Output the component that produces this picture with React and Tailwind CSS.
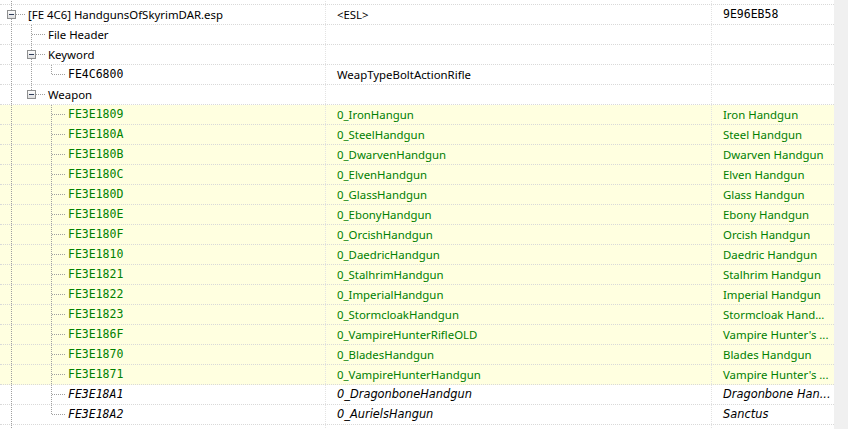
import React from "react";

const UI = "font-['Noto_Sans',sans-serif] text-[11.4px]";
const UI_IT = "font-['DejaVu_Sans',sans-serif] text-[11.4px]";
const MONO = "font-['DejaVu_Sans_Mono',monospace] text-[11.5px]";

// one indent column of the tree: "pass" keeps the parent's line going,
// "tee"/"end" branch into the node, "box" adds the collapse button
function Guide({ kind, last, box }) {
  const w = last ? 27 : 20;
  const dot = { stroke: "#a0a0a0", strokeWidth: 1, strokeDasharray: "1 1" };
  return (
    <svg width={w} height={19} className="shrink-0 block">
      {kind === "pass" && <line x1={11.5} y1={0} x2={11.5} y2={19} {...dot} />}
      {kind === "tee" && <line x1={11.5} y1={0} x2={11.5} y2={19} {...dot} />}
      {kind === "end" && <line x1={11.5} y1={0} x2={11.5} y2={10} {...dot} />}
      {last && <line x1={box ? 16 : 12} y1={9.5} x2={25} y2={9.5} {...dot} />}
      {box && (
        <g>
          <defs>
            <linearGradient id="bx" x1="0" y1="0" x2="0" y2="1">
              <stop offset="0" stopColor="#ffffff" />
              <stop offset="1" stopColor="#dcdcdc" />
            </linearGradient>
          </defs>
          <rect x={7.5} y={5.5} width={8} height={8} fill="url(#bx)" stroke="#8e8f8f" />
          <line x1={9} y1={9.5} x2={14} y2={9.5} stroke="#2f3e5c" />
        </g>
      )}
    </svg>
  );
}

function Row({ guides, box, label, mono, sig, name, tone = "plain", italic }) {
  const bg = tone === "hit" ? "bg-[#ffffe0]" : "bg-white";
  const color = tone === "hit" ? "text-[#008000]" : "text-black";
  const it = italic ? "italic" : "";
  const ui = italic ? UI_IT : UI;
  return (
    <div className={`flex h-[20px] border-b border-dotted border-[#d9d9d9] ${bg} ${color} ${it}`}>
      <div className="flex w-[326px] shrink-0 items-center border-r border-dotted border-[#e3e3e3] overflow-hidden whitespace-nowrap">
        {guides.map((g, i) => (
          <Guide key={i} kind={g} last={i === guides.length - 1} box={box && i === guides.length - 1} />
        ))}
        <span className={`pl-[1px] leading-[19px] ${mono ? MONO : ui}`}>{label}</span>
      </div>
      <div className={`flex w-[386px] shrink-0 items-center pl-[11px] border-r border-dotted border-[#e3e3e3] whitespace-nowrap overflow-hidden ${ui}`}>
        {sig}
      </div>
      <div className={`flex w-[122px] shrink-0 items-center pl-[11px] whitespace-nowrap overflow-hidden ${name && name.mono ? MONO : ui}`}>
        {name && name.text}
      </div>
    </div>
  );
}

const WEAPONS = [
  ["FE3E1809", "0_IronHangun", "Iron Handgun"],
  ["FE3E180A", "0_SteelHandgun", "Steel Handgun"],
  ["FE3E180B", "0_DwarvenHandgun", "Dwarven Handgun"],
  ["FE3E180C", "0_ElvenHandgun", "Elven Handgun"],
  ["FE3E180D", "0_GlassHandgun", "Glass Handgun"],
  ["FE3E180E", "0_EbonyHandgun", "Ebony Handgun"],
  ["FE3E180F", "0_OrcishHandgun", "Orcish Handgun"],
  ["FE3E1810", "0_DaedricHandgun", "Daedric Handgun"],
  ["FE3E1821", "0_StalhrimHandgun", "Stalhrim Handgun"],
  ["FE3E1822", "0_ImperialHandgun", "Imperial Handgun"],
  ["FE3E1823", "0_StormcloakHandgun", "Stormcloak Hand..."],
  ["FE3E186F", "0_VampireHunterRifleOLD", "Vampire Hunter's ..."],
  ["FE3E1870", "0_BladesHandgun", "Blades Handgun"],
  ["FE3E1871", "0_VampireHunterHandgun", "Vampire Hunter's ..."],
  ["FE3E18A1", "0_DragonboneHandgun", "Dragonbone Han...", true],
  ["FE3E18A2", "0_AurielsHangun", "Sanctus", true],
];

export default function App() {
  return (
    <div className="w-[848px] h-[429px] overflow-hidden bg-white flex">
      <div className="w-[834px] shrink-0 -mt-[15px]">
        {/* previous plugin, scrolled mostly out of view */}
        <Row guides={["tee"]} label="" />
        <Row guides={["tee"]} box label="[FE 4C6] HandgunsOfSkyrimDAR.esp" sig="<ESL>" name={{ text: "9E96EB58", mono: true }} />
        <Row guides={["pass", "tee"]} label="File Header" />
        <Row guides={["pass", "tee"]} box label="Keyword" />
        <Row guides={["pass", "pass", "end"]} label="FE4C6800" mono sig="WeapTypeBoltActionRifle" />
        <Row guides={["pass", "end"]} box label="Weapon" />
        {WEAPONS.map(([id, edid, full, dim], i) => (
          <Row
            key={id}
            guides={["pass", "none", i === WEAPONS.length - 1 ? "end" : "tee"]}
            label={id}
            mono
            sig={edid}
            name={{ text: full }}
            tone={dim ? "plain" : "hit"}
            italic={dim}
          />
        ))}
        <Row guides={["pass"]} label="" />
      </div>
      <div className="flex-1 bg-[#f0f0f0]" />
    </div>
  );
}
